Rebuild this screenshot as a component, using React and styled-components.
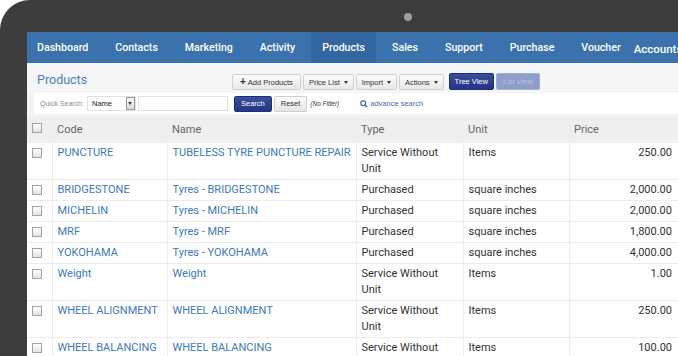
import React from "react";
import styled, { createGlobalStyle } from "styled-components";

const GlobalStyle = createGlobalStyle`
  html, body {
    margin: 0;
    padding: 0;
    background: #ffffff;
    overflow: hidden;
  }
`;

const Device = styled.div`
  width: 678px;
  height: 356px;
  background: #3d3d3d;
  border-top-left-radius: 30px;
  display: flex;
  flex-direction: column;
  overflow: hidden;
`;

const Bezel = styled.div`
  flex: 0 0 32px;
  display: flex;
  align-items: center;
  padding: 2px 0 0 404px;
  box-sizing: border-box;
`;

const Camera = styled.span`
  width: 8px;
  height: 8px;
  border-radius: 50%;
  background: #9e9e9e;
`;

const Screen = styled.div`
  margin-left: 27px;
  flex: 1;
  min-height: 0;
  background: #f3f3f3;
  overflow: hidden;
  font-family: Roboto, "Liberation Sans", sans-serif;
`;

const Nav = styled.nav`
  height: 31px;
  background: #3b72ad;
  display: flex;
  align-items: stretch;
  white-space: nowrap;
`;

const NavItem = styled.a`
  display: flex;
  align-items: center;
  padding: 0 11px;
  margin-right: 5px;
  color: #ffffff;
  font-size: 10.6px;
  font-weight: 500;
  background: ${(p) => (p.$active ? "#3466a2" : "transparent")};
  &:first-child {
    padding-left: 10px;
  }
`;

const NavExtra = styled.a`
  display: flex;
  align-items: center;
  padding: 2px 0 0;
  margin-left: -3px;
  color: #ffffff;
  font-size: 11.5px;
  font-weight: 500;
`;

const Toolbar = styled.div`
  height: 30px;
  display: flex;
  align-items: flex-end;
  padding: 0 0 3px 10px;
  box-sizing: border-box;
  background: #f6f6f6;
  font-family: "Liberation Sans", Arial, sans-serif;
`;

const Title = styled.h1`
  flex: 0 0 195px;
  margin: 0;
  padding-bottom: 2px;
  font-family: Roboto, sans-serif;
  font-size: 12.5px;
  line-height: 16px;
  font-weight: 400;
  color: #4a80bf;
`;

const ButtonGroup = styled.div`
  display: flex;
  gap: 2px;
  margin-right: 5px;
`;

const ToolButton = styled.button`
  height: 16px;
  padding: 0 ${(p) => p.$px || 5}px;
  border: 1px solid #cfcfcf;
  border-radius: 2px;
  background: linear-gradient(#fbfbfb, #e9e9e9);
  color: #333;
  font-family: inherit;
  font-size: 7.5px;
  display: flex;
  align-items: center;
  gap: 2px;
  white-space: nowrap;
`;

const Plus = styled.b`
  font-size: 10px;
  line-height: 8px;
`;

const ViewButton = styled.button`
  height: 17px;
  margin-right: 2px;
  padding: 0 ${(p) => p.$px || 6}px;
  border: 1px solid ${(p) => (p.$on ? "#1e2f78" : "#a4b0d2")};
  border-radius: 2px;
  background: ${(p) =>
    p.$on ? "linear-gradient(#3a4e9c, #233584)" : "#8f9dc9"};
  color: ${(p) => (p.$on ? "#ffffff" : "#b9c3e2")};
  font-style: ${(p) => (p.$on ? "normal" : "italic")};
  font-family: inherit;
  font-size: 7.5px;
  white-space: nowrap;
`;

const Caret = styled.span`
  width: 0;
  height: 0;
  border-left: 2.5px solid transparent;
  border-right: 2.5px solid transparent;
  border-top: 3px solid #333;
  margin-left: 2px;
`;

const SearchBar = styled.div`
  height: 21px;
  margin-left: 7px;
  background: #ffffff;
  display: flex;
  align-items: center;
  padding-left: 6px;
  font-family: "Liberation Sans", Arial, sans-serif;
  font-size: 7.5px;
  white-space: nowrap;
`;

const Label = styled.span`
  color: #8c8c8c;
  font-size: 7px;
  margin-right: 3px;
`;

const Select = styled.div`
  width: 49px;
  height: 15px;
  border: 1px solid #e2e2e2;
  display: flex;
  align-items: center;
  justify-content: space-between;
  padding-left: 4px;
  box-sizing: border-box;
  color: #222;
  margin-right: 2px;
`;

const SelectArrow = styled.span`
  width: 9px;
  height: 13px;
  border: 1px solid #9a9a9a;
  box-sizing: border-box;
  background: linear-gradient(#f6f6f6, #dcdcdc);
  display: flex;
  align-items: center;
  justify-content: center;
  &::after {
    content: "";
    border-left: 2px solid transparent;
    border-right: 2px solid transparent;
    border-top: 3px solid #444;
  }
`;

const TextInput = styled.div`
  width: 90px;
  height: 15px;
  border: 1px solid #e2e2e2;
  box-sizing: border-box;
  margin-right: 6px;
`;

const SearchButton = styled.button`
  height: 16px;
  padding: 0 6px;
  margin-right: 2px;
  border: 1px solid ${(p) => (p.$primary ? "#1e2f78" : "#cfcfcf")};
  border-radius: 2px;
  background: ${(p) =>
    p.$primary ? "linear-gradient(#3a4e9c, #233584)" : "linear-gradient(#fbfbfb, #e6e6e6)"};
  color: ${(p) => (p.$primary ? "#ffffff" : "#333")};
  font-family: inherit;
  font-size: 7.5px;
`;

const NoFilter = styled.span`
  font-style: italic;
  font-size: 6.5px;
  color: #333;
  margin: 0 21px 0 1px;
`;

const AdvLink = styled.a`
  display: flex;
  align-items: center;
  gap: 2px;
  color: #3a6fb0;
`;

const Table = styled.table`
  margin-top: 3px;
  width: 651px;
  border-collapse: collapse;
  table-layout: fixed;
  font-size: 11px;
  line-height: 16px;
`;

const Th = styled.th`
  text-align: left;
  font-weight: 400;
  color: #666;
  padding: 5px 5px 5px;
  background: #efefef;
  vertical-align: top;
`;

const Tr = styled.tr`
  background: #ffffff;
`;

const Td = styled.td`
  padding: 2px 5px 2px;
  vertical-align: top;
  white-space: ${(p) => (p.$link ? "nowrap" : "normal")};
  color: ${(p) => (p.$link ? "#3d7ab8" : "#333")};
  text-align: ${(p) => (p.$right ? "right" : "left")};
  border-bottom: 1px solid #ececec;
  border-left: 1px solid #ececec;
  &:first-child {
    border-left: none;
  }
  &:last-child {
    padding-right: 6px;
  }
`;

const Check = styled.span`
  display: block;
  width: 10px;
  height: 10px;
  margin-top: ${(p) => (p.$head ? 1 : 3)}px;
  border: 1px solid #a3a3a3;
  box-sizing: border-box;
  background: linear-gradient(#ffffff, #e4e4e4);
`;

const products = [
  ["PUNCTURE", "TUBELESS TYRE PUNCTURE REPAIR", "Service Without Unit", "Items", "250.00"],
  ["BRIDGESTONE", "Tyres - BRIDGESTONE", "Purchased", "square inches", "2,000.00"],
  ["MICHELIN", "Tyres - MICHELIN", "Purchased", "square inches", "2,000.00"],
  ["MRF", "Tyres - MRF", "Purchased", "square inches", "1,800.00"],
  ["YOKOHAMA", "Tyres - YOKOHAMA", "Purchased", "square inches", "4,000.00"],
  ["Weight", "Weight", "Service Without Unit", "Items", "1.00"],
  ["WHEEL ALIGNMENT", "WHEEL ALIGNMENT", "Service Without Unit", "Items", "250.00"],
  ["WHEEL BALANCING", "WHEEL BALANCING", "Service Without Unit", "Items", "100.00"],
];

const menu = ["Dashboard", "Contacts", "Marketing", "Activity", "Products", "Sales", "Support", "Purchase", "Voucher"];

function SearchIcon() {
  return (
    <svg width="8" height="8" viewBox="0 0 10 10">
      <circle cx="4" cy="4" r="3" fill="none" stroke="#3a6fb0" strokeWidth="1.5" />
      <line x1="6.2" y1="6.2" x2="9" y2="9" stroke="#3a6fb0" strokeWidth="1.8" />
    </svg>
  );
}

export default function App() {
  return (
    <>
      <GlobalStyle />
      <Device>
        <Bezel>
          <Camera />
        </Bezel>
        <Screen>
          <Nav>
            {menu.map((m) => (
              <NavItem key={m} $active={m === "Products"}>
                {m}
              </NavItem>
            ))}
            <NavExtra>Accounts</NavExtra>
          </Nav>

          <Toolbar>
            <Title>Products</Title>
            <ButtonGroup>
              <ToolButton $px={7}>
                <Plus>+</Plus>Add Products
              </ToolButton>
              <ToolButton>
                Price List<Caret />
              </ToolButton>
              <ToolButton>
                Import<Caret />
              </ToolButton>
              <ToolButton>
                Actions<Caret />
              </ToolButton>
            </ButtonGroup>
            <ViewButton $on $px={5}>Tree View</ViewButton>
            <ViewButton $px={6}>List View</ViewButton>
          </Toolbar>

          <SearchBar>
            <Label>Quick Search:</Label>
            <Select>
              Name
              <SelectArrow />
            </Select>
            <TextInput />
            <SearchButton $primary>Search</SearchButton>
            <SearchButton>Reset</SearchButton>
            <NoFilter>(No Filter)</NoFilter>
            <AdvLink>
              <SearchIcon />
              advance search
            </AdvLink>
          </SearchBar>

          <Table>
            <colgroup>
              <col style={{ width: 25 }} />
              <col style={{ width: 115 }} />
              <col style={{ width: 189 }} />
              <col style={{ width: 107 }} />
              <col style={{ width: 106 }} />
              <col style={{ width: 109 }} />
            </colgroup>
            <thead>
              <tr>
                <Th><Check $head /></Th>
                <Th>Code</Th>
                <Th>Name</Th>
                <Th>Type</Th>
                <Th>Unit</Th>
                <Th>Price</Th>
              </tr>
            </thead>
            <tbody>
              {products.map((p) => (
                <Tr key={p[0]}>
                  <Td><Check /></Td>
                  <Td $link>{p[0]}</Td>
                  <Td $link>{p[1]}</Td>
                  <Td>{p[2]}</Td>
                  <Td>{p[3]}</Td>
                  <Td $right>{p[4]}</Td>
                </Tr>
              ))}
            </tbody>
          </Table>
        </Screen>
      </Device>
    </>
  );
}
